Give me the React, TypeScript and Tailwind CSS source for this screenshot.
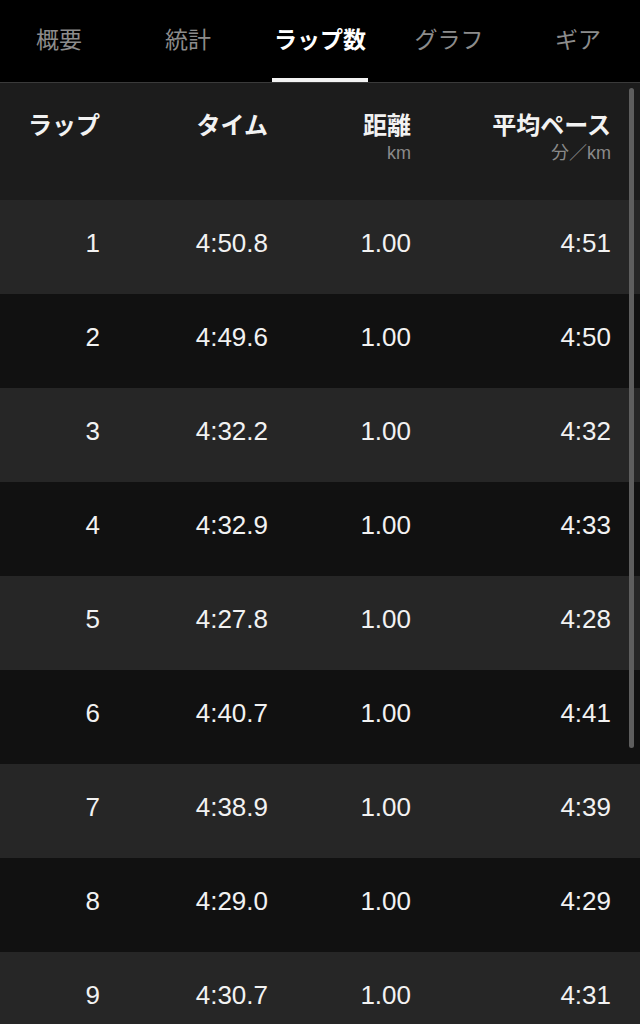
import React from 'react';

const laps = [
  { n: 1, time: '4:50.8', dist: '1.00', pace: '4:51' },
  { n: 2, time: '4:49.6', dist: '1.00', pace: '4:50' },
  { n: 3, time: '4:32.2', dist: '1.00', pace: '4:32' },
  { n: 4, time: '4:32.9', dist: '1.00', pace: '4:33' },
  { n: 5, time: '4:27.8', dist: '1.00', pace: '4:28' },
  { n: 6, time: '4:40.7', dist: '1.00', pace: '4:41' },
  { n: 7, time: '4:38.9', dist: '1.00', pace: '4:39' },
  { n: 8, time: '4:29.0', dist: '1.00', pace: '4:29' },
  { n: 9, time: '4:30.7', dist: '1.00', pace: '4:31' },
];

const tabs = [
  { label: '概要', w: 'w-[118px]' },
  { label: '統計', w: 'w-[140px]' },
  { label: 'ラップ数', w: 'w-[124px]', active: true },
  { label: 'グラフ', w: 'w-[134px]' },
  { label: 'ギア', w: 'w-[124px]' },
];

const cols = 'grid grid-cols-[100px_168px_143px_200px]';

export default function App() {
  return (
    <div className="relative h-[1024px] w-[640px] overflow-hidden bg-[#111111] font-['Liberation_Sans','Noto_Sans_CJK_JP',sans-serif] text-[#f2f2f2]">
      {/* Tabs */}
      <div className="flex h-[82px] bg-black">
        {tabs.map(t => (
          <div key={t.label} className={`${t.w} flex justify-center`}>
            <div
              className={`flex h-full flex-col items-center justify-end px-[2px] ${
                t.active ? 'border-b-4 border-[#f2f2f2] font-bold text-white' : 'border-b-4 border-transparent text-[#8c8c8c]'
              }`}
            >
              <span className="pb-[23px] text-[23px] leading-[30px]">{t.label}</span>
            </div>
          </div>
        ))}
      </div>
      <div className="h-px bg-[#3a3a3a]" />

      {/* Header */}
      <div className={`${cols} h-[117px] bg-[#1c1c1c] pt-[28px]`}>
        <div className="text-right text-[24px] font-bold leading-[30px]">ラップ</div>
        <div className="text-right text-[24px] font-bold leading-[30px]">タイム</div>
        <div className="flex flex-col items-end">
          <span className="text-[24px] font-bold leading-[30px]">距離</span>
          <span className="text-[18px] leading-[24px] text-[#8a8a8a]">km</span>
        </div>
        <div className="flex flex-col items-end">
          <span className="text-[24px] font-bold leading-[30px]">平均ペース</span>
          <span className="text-[18px] leading-[24px] text-[#8a8a8a]">分／km</span>
        </div>
      </div>

      {/* Rows */}
      {laps.map(l => (
        <div
          key={l.n}
          className={`${cols} h-[94px] items-center pb-2 text-[26px] ${l.n % 2 === 1 ? 'bg-[#262626]' : 'bg-[#111111]'}`}
        >
          <div className="text-right">{l.n}</div>
          <div className="text-right">{l.time}</div>
          <div className="text-right">{l.dist}</div>
          <div className="text-right">{l.pace}</div>
        </div>
      ))}

      {/* Scrollbar */}
      <div className="absolute right-[6px] top-[88px] h-[660px] w-[5px] rounded-full bg-[#5e5e5e]" />
    </div>
  );
}
